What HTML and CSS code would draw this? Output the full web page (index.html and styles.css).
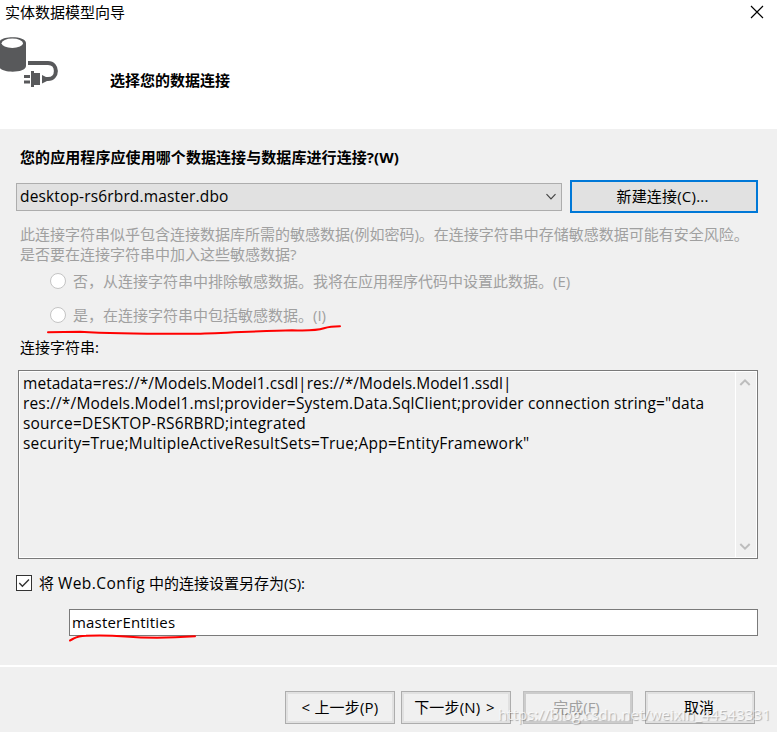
FILE: index.html
```html
<!DOCTYPE html>
<html lang="zh-CN">
<head>
<meta charset="utf-8">
<title>实体数据模型向导</title>
<link rel="stylesheet" href="styles.css">
</head>
<body>
<main class="wizard">
  <header class="banner">
    <div class="titlebar">
      <span>实体数据模型向导</span>
      <svg class="close" width="14" height="14" viewBox="0 0 14 14"><path d="M1 1 L13 13 M13 1 L1 13" stroke="#000" stroke-width="1.15" fill="none"/></svg>
    </div>
    <div class="intro">
      <svg class="db" width="60" height="54" viewBox="0 0 60 54">
        <path d="M-1 7 C-1 -.7 26 -.7 26 7 V30 C26 37.6 -1 37.6 -1 30 Z" fill="#58595b"/>
        <ellipse cx="12.3" cy="7.3" rx="10.7" ry="4.7" fill="#fff"/>
        <path d="M28 27 H48 C58.500 27 58.500 43 48 43 H45" stroke="#58595b" stroke-width="4" fill="none"/>
        <path d="M24 40.500 H30 M24 46 H30" stroke="#58595b" stroke-width="3"/>
        <path d="M31 35 H34 V37 H40 V49 H34 V51 H31 Z M42 39 L47 41.500 V45 L42 47.500 Z" fill="#58595b"/>
      </svg>
      <h1>选择您的数据连接</h1>
    </div>
  </header>

  <section class="content">
    <h2>您的应用程序应使用哪个数据连接与数据库进行连接?(W)</h2>
    <div class="source">
      <div class="combo"><span class="latin">desktop-rs6rbrd.master.dbo</span>
        <svg width="12" height="8" viewBox="0 0 12 8"><path d="M1.5 1.2 L6 5.8 L10.5 1.2" stroke="#444" stroke-width="1.2" fill="none"/></svg>
      </div>
      <button class="new">新建连接(C)...</button>
    </div>
    <p class="note">此连接字符串似乎包含连接数据库所需的敏感数据(例如密码)。在连接字符串中存储敏感数据可能有安全风险。<br>是否要在连接字符串中加入这些敏感数据?</p>
    <div class="choice first"><i class="radio"></i><span>否，从连接字符串中排除敏感数据。我将在应用程序代码中设置此数据。(E)</span></div>
    <div class="choice second"><i class="radio"></i><span>是，在连接字符串中包括敏感数据。(I)</span>
      <svg class="mark" width="296" height="12" viewBox="0 0 296 12"><path d="M1 7.3 L33 6.8 C70 9 110 9 150 8.8 C180 8 220 5.5 245 5.2 C284 6.8 270 1.300 293 1.3" /></svg>
    </div>
    <div class="caption">连接字符串:</div>
    <div class="textbox">
      <div class="value"><span class="l1">metadata=res://*/Models.Model1.csdl|res://*/Models.Model1.ssdl|</span><br><span class="l2">res://*/Models.Model1.msl;provider=System.Data.SqlClient;provider connection string="data</span><br><span class="l3">source=DESKTOP-RS6RBRD;integrated</span><br><span class="l4">security=True;MultipleActiveResultSets=True;App=EntityFramework"</span></div>
      <div class="scroll">
        <svg width="12" height="9" viewBox="0 0 12 9"><path d="M1.3 7 L6 2.3 L10.7 7"/></svg>
        <svg width="12" height="9" viewBox="0 0 12 9"><path d="M1.3 2 L6 6.7 L10.7 2"/></svg>
      </div>
    </div>
    <div class="save">
      <span class="check"><svg width="14" height="14" viewBox="0 0 14 14"><path d="M2.3 7 L5.4 10.2 L12 3.5" stroke="#333" stroke-width="1.4" fill="none"/></svg></span>
      <span>将 <span class="web">Web.Config</span> 中的连接设置另存为(S):</span>
    </div>
    <div class="name"><span>masterEntities</span>
      <svg class="mark" width="132" height="10" viewBox="0 0 132 10"><path d="M2 7.5 C8 5 7 3 18 2.8 C60 .5 60 8 127 3.3"/></svg>
    </div>
  </section>

  <footer class="actions">
    <button class="prev">&lt; 上一步(P)</button>
    <button class="next">下一步(N) &gt;</button>
    <button class="disabled">完成(F)</button>
    <button class="cancel">取消</button>
    <span class="watermark">https://blog.csdn.net/weixin_44543331</span>
  </footer>
</main>
</body>
</html>
```
FILE: styles.css
```css
* { box-sizing: border-box; }
body {
  margin: 0;
  background: #f0f0f0;
  color: #000;
  font: 15px/20px "Open Sans", "Noto Sans CJK SC", sans-serif;
  white-space: nowrap;
}
.wizard { width: 777px; height: 732px; display: flex; flex-direction: column; overflow: hidden; }
.banner { height: 129px; background: #fff; }
.titlebar { height: 24px; padding: 0 13px 0 5px; display: flex; align-items: center; justify-content: space-between; }
.titlebar span { padding-bottom: 1px; }
.close { display: block; }
.intro { display: flex; align-items: flex-start; margin-top: 12px; }
.db { display: block; flex: none; }
h1, h2 { margin: 0; font-size: 15px; line-height: 20px; font-weight: 700; }
h1 { margin: 34px 0 0 50px; }
.content { height: 536px; padding: 18px 19px 0 16px; }
h2 { padding-left: 4px; letter-spacing: .08px; }
.source { display: flex; align-items: center; justify-content: space-between; height: 33px; margin-top: 13px; }
.combo { width: 546px; height: 28px; border: 1px solid #adadad; background: #e1e1e1; display: flex; align-items: center; justify-content: space-between; padding: 0 4px 0 3px; }
.combo .latin { font-size: 15.5px; letter-spacing: .15px; padding-bottom: 2px; }
button { font: inherit; color: #000; padding: 0 0 2px; margin: 0; border-radius: 0; }
.new { width: 188px; height: 33px; border: 2px solid #0078d7; background: #e1e1e1; letter-spacing: .2px; padding-right: 3px; }
.note { margin: 11px 0 0 4px; color: #a0a0a0; }
.choice { display: flex; align-items: center; height: 20px; padding-left: 34px; color: #a0a0a0; gap: 7px; position: relative; }
.first { margin-top: 7px; }
.second { margin-top: 14px; }
.radio { width: 16px; height: 16px; border: 1px solid #c4c4c4; border-radius: 50%; background: #fff; }
.mark { position: absolute; fill: none; stroke: #f00; stroke-width: 2; stroke-linecap: round; overflow: visible; }
.second .mark { left: 31px; top: 20px; }
.caption { margin: 12px 0 0 4px; }
.textbox { width: 740px; height: 189px; margin: 13px 0 0 2px; border: 1px solid #7a7a7a; box-shadow: inset 0 0 0 1px #fff; display: flex; justify-content: space-between; padding: 1px; }
.value { padding: 1px 0 0 3px; font-size: 15.5px; }
.l1 { letter-spacing: .04px; }
.l2 { letter-spacing: .165px; }
.l3 { letter-spacing: .2px; }
.l4 { letter-spacing: .23px; }
.scroll { width: 21px; border-left: 1px solid #fff; display: flex; flex-direction: column; justify-content: space-between; padding: 6px 0 6px 3px; }
.scroll path { fill: none; stroke: #bdbdbd; stroke-width: 2; }
.save { display: flex; align-items: center; gap: 7px; height: 20px; margin-top: 14px; }
.web { font-size: 15.5px; letter-spacing: .45px; }
.check { width: 16px; height: 16px; border: 1px solid #333; background: #fff; display: flex; }
.name { width: 689px; height: 27px; margin: 16px 0 0 53px; border: 1px solid #7a7a7a; background: #fff; padding: 2px; position: relative; letter-spacing: .19px; }
.name .mark { left: -2px; top: 23px; }
.actions { flex: 1; border-top: 2px solid #fff; padding: 24px 22px 0 285px; display: flex; align-items: flex-start; position: relative; }
.actions button { width: 110px; height: 33px; border: 1px solid #adadad; background: #f0f0f0; box-shadow: inset 0 0 0 2px #e1e1e1; }
.actions button + button { margin-left: 6px; }
.actions button:nth-child(n+3) { margin-left: 12px; }
.actions .prev { letter-spacing: .2px; }
.actions .next { letter-spacing: .2px; word-spacing: 1.5px; padding-right: 3px; }
.actions .disabled { color: #a0a0a0; border-color: #bfbfbf; box-shadow: inset 0 0 0 2px #ccc; padding-right: 3px; }
.actions .cancel { padding-right: 2px; }
.watermark { position: absolute; left: 498px; top: 37px; font-size: 15px; letter-spacing: .07px; color: rgba(255,255,255,.75); text-shadow: 1px 1px 1px rgba(0,0,0,.28); }
```
